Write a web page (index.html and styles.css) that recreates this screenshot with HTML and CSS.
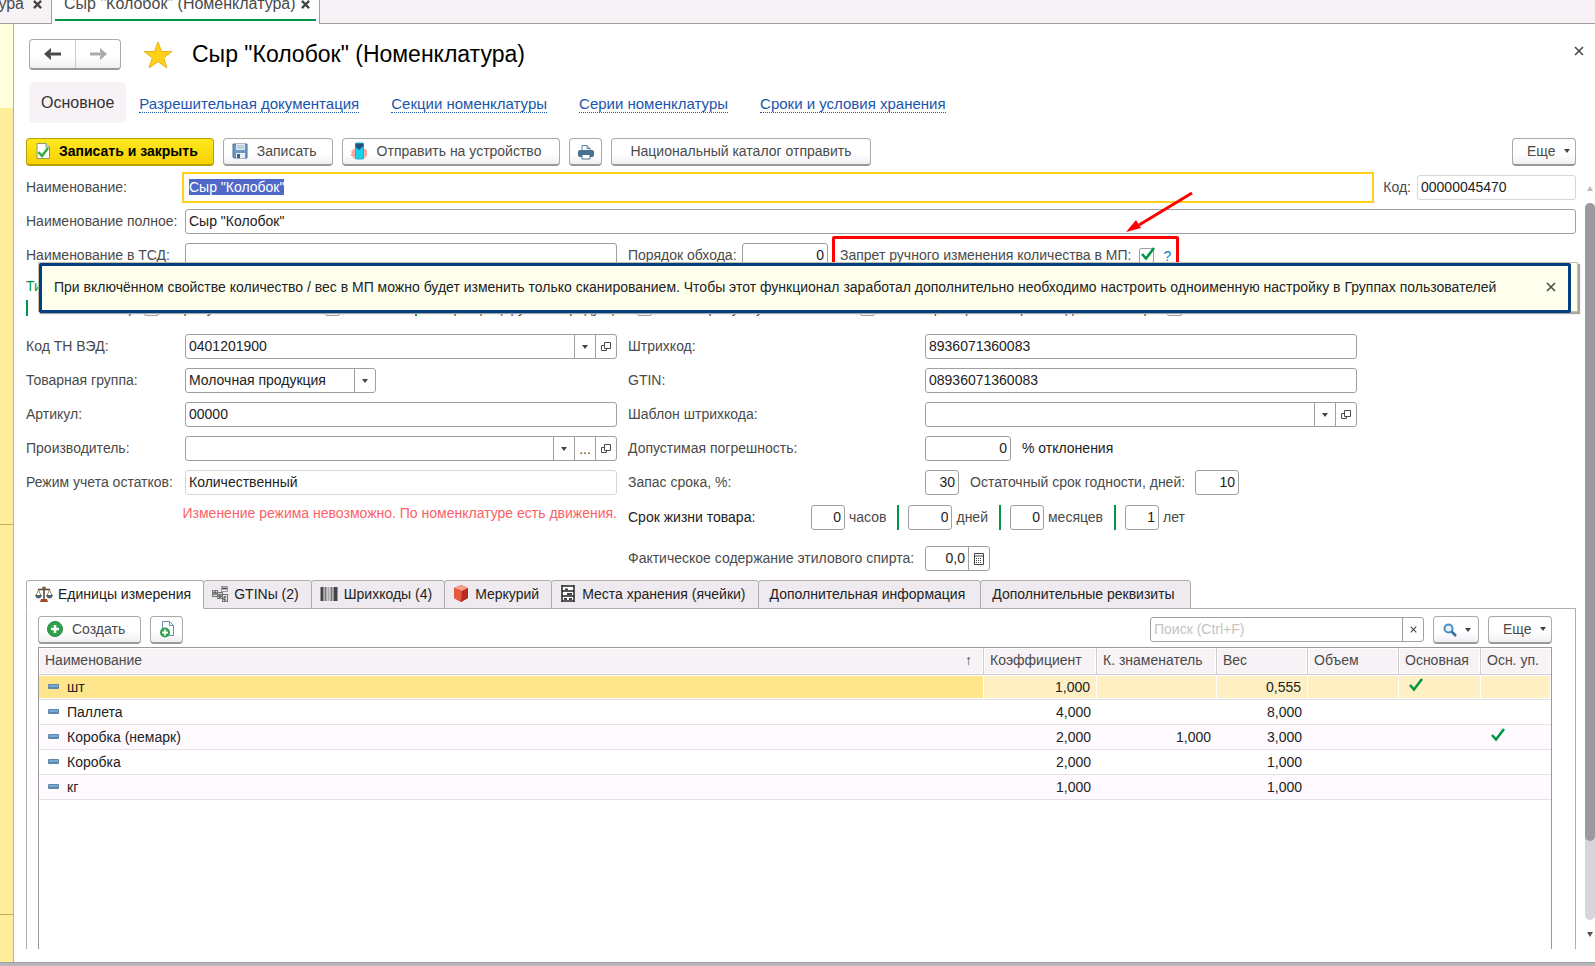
FILE: index.html
```html
<!DOCTYPE html>
<html lang="ru">
<head>
<meta charset="utf-8">
<title>Сыр "Колобок" (Номенклатура)</title>
<link rel="stylesheet" href="styles.css">
</head>
<body>
<svg class="sprite" aria-hidden="true">
  <symbol id="i-down" viewBox="0 0 6 4"><path d="M0 0h6L3 4z" fill="#444"/></symbol>
  <symbol id="i-open" viewBox="0 0 12 12"><path d="M4.500 1.500h6v6h-6zM4 4.500H1.500v5h5V8" fill="none" stroke="#4a4a4a"/></symbol>
  <symbol id="i-x" viewBox="0 0 10 10"><path d="M1 1l8 8M9 1l-8 8" fill="none" stroke="#444" stroke-width="1.500"/></symbol>
  <symbol id="i-xb" viewBox="0 0 10 10"><path d="M1 1l8 8M9 1l-8 8" fill="none" stroke="#444" stroke-width="2.500"/></symbol>
  <symbol id="i-check" viewBox="0 0 14 14"><path d="M1 7l4 4.500L13 1" fill="none" stroke="#009646" stroke-width="2.600"/></symbol>
  <symbol id="i-item" viewBox="0 0 11 5"><rect width="11" height="5" rx="1" fill="#5f86a8"/><rect x="1" y="1" width="9" height="2" fill="#74a9d8"/></symbol>
</svg>

<nav class="tabbar" aria-label="Открытые окна">
  <div class="wtab wtab-cut"><span>ура</span><svg class="x-bold"><use href="#i-xb"/></svg></div>
  <div class="wtab wtab-on"><span>Сыр "Колобок" (Номенклатура)</span><svg class="x-bold"><use href="#i-xb"/></svg></div>
</nav>

<div class="shell">
  <aside class="strip"><i class="s1"></i><i class="s2"></i><i class="s3"></i><i class="s4"></i></aside>

  <main class="page">
    <header class="head">
      <div class="history">
        <button type="button" aria-label="Назад"><svg width="18" height="12" viewBox="0 0 18 12"><path d="M17 6H4" stroke="#4a4a4a" stroke-width="3"/><path d="M0 6l7-6v3.500L5 6l2 2.500V12z" fill="#4a4a4a"/></svg></button>
        <button type="button" aria-label="Вперед"><svg width="18" height="12" viewBox="0 0 18 12"><path d="M1 6h13" stroke="#aaa" stroke-width="3"/><path d="M18 6l-7-6v3.500L13 6l-2 2.500V12z" fill="#aaa"/></svg></button>
      </div>
      <svg class="star" viewBox="0 0 30 28"><path d="M15 1l3.600 9.500H29l-8.300 6.300L24 27l-9-6.300L6 27l3.300-10.200L1 10.500h10.400z" fill="#ffd015" stroke="#e8b11c"/></svg>
      <h1>Сыр "Колобок" (Номенклатура)</h1>
      <button type="button" class="plain close" aria-label="Закрыть"><svg width="10" height="10"><use href="#i-x"/></svg></button>
    </header>

    <nav class="sections">
      <span class="current">Основное</span>
      <a href="#doc">Разрешительная документация</a>
      <a href="#sec">Секции номенклатуры</a>
      <a href="#ser">Серии номенклатуры</a>
      <a href="#store">Сроки и условия хранения</a>
    </nav>

    <div class="toolbar">
      <button type="button" class="btn primary">
        <svg width="14" height="16" viewBox="0 0 14 16"><path d="M1 .5h9l3.500 3.500v11.500H1z" fill="#fff" stroke="#8a9a6a"/><path d="M10 .5V4h3.500" fill="#ddd" stroke="#8a9a6a"/><path d="M2.500 9l3.500 4 6-8" fill="none" stroke="#2fae3e" stroke-width="2.500"/></svg>
        <span>Записать и закрыть</span></button>
      <button type="button" class="btn">
        <svg width="16" height="16" viewBox="0 0 16 16"><path d="M1 1h14v14H2l-1-1z" fill="#6f97c4" stroke="#4a6f9c"/><path d="M4 1h9v6H4z" fill="#dfe8f2"/><path d="M5 3h7M5 5h7" stroke="#9db4cc"/><path d="M4 10h9v5H4z" fill="#e8eef5"/><path d="M5 11h3v4H5z" fill="#3f6187"/></svg>
        <span>Записать</span></button>
      <button type="button" class="btn send">
        <svg width="17" height="18" viewBox="0 0 17 18"><path d="M4 6L1 8v3l-1 2 2 3 2 1zM13 6l3 2v6l-3 3z" fill="#fbb9b2"/><path d="M4.500 2q0-1 1-1h6q1 0 1 1v14q0 1-1 1h-6q-1 0-1-1z" fill="#14d4ea" stroke="#35a9c4"/><path d="M4.500 1.500h8V4L8 8 4.500 5z" fill="#23517f"/><path d="M0 10h4M0 13h4M13 9h3M13 12h3" stroke="#f48d86"/></svg>
        <span>Отправить на устройство</span></button>
      <button type="button" class="btn icon-only" aria-label="Печать">
        <svg width="16" height="16" viewBox="0 0 16 16"><path d="M4 7V1.500h5l3 3V7" fill="#fff" stroke="#5c7f9e"/><path d="M9 1.500v3h3" fill="none" stroke="#5c7f9e"/><rect y="6" width="16" height="7" rx="2" fill="#48708f"/><path d="M4 10.500h8v4.500H4z" fill="#fff" stroke="#48708f"/></svg></button>
      <button type="button" class="btn catalog">Национальный каталог отправить</button>
      <button type="button" class="btn more">Еще <svg width="6" height="4"><use href="#i-down"/></svg></button>
    </div>

    <div class="scroll">
      <form class="form" onsubmit="return false">
        <div class="row">
          <label class="lab" for="name">Наименование:</label>
          <input class="box grow focused" id="name" value='Сыр "Колобок"'>
          <label class="code-lab" for="code">Код:</label>
          <input class="box ro code" id="code" value="00000045470" readonly>
        </div>
        <div class="row">
          <label class="lab" for="full">Наименование полное:</label>
          <input class="box grow" id="full" value='Сыр "Колобок"'>
        </div>
        <div class="row cols">
          <label for="tsd">Наименование в ТСД:</label>
          <input class="box" id="tsd">
          <div class="tail from-mid">
            <label class="order-lab" for="order">Порядок обхода:</label>
            <input class="box num w86" id="order" value="0">
            <div class="callout">
              <label for="ban">Запрет ручного изменения количества в МП:</label>
              <span class="tick"><input type="checkbox" id="ban" checked><svg width="14" height="14"><use href="#i-check"/></svg></span>
              <button type="button" class="plain help">?</button>
              <svg class="arrow" width="70" height="44" viewBox="0 0 70 44"><path d="M67 3L14 35" stroke="#f00" stroke-width="3"/><path d="M1 42l10-12 5 8z" fill="#f00"/></svg>
            </div>
          </div>
        </div>

        <div class="kind" role="group" aria-labelledby="kind-title">
          <div class="kind-title" id="kind-title">Тип номенклатуры</div>
          <div class="flags">
            <label class="f1">Весовой товар: <input type="checkbox"></label>
            <label class="f2">Требует взвешивания: <input type="checkbox"></label>
            <label class="f3">Сертифицируемая продукция: <input type="checkbox"></label>
            <label class="f4">Не требует учета остатков: <input type="checkbox"></label>
            <label class="f5">Контролировать сроки годности товара: <input type="checkbox"></label>
          </div>
          <div class="tip" role="tooltip">
            <div class="tip-frame">
              <span>При включённом свойстве количество / вес в МП можно будет изменить только сканированием. Чтобы этот функционал заработал дополнительно необходимо настроить одноименную настройку в Группах пользователей</span>
              <button type="button" class="plain" aria-label="Закрыть подсказку"><svg width="10" height="10"><use href="#i-x"/></svg></button>
            </div>
          </div>
        </div>

        <div class="row cols">
          <label for="tnved">Код ТН ВЭД:</label>
          <div class="box combo"><input id="tnved" value="0401201900"><button type="button" aria-label="Выбрать"><svg width="6" height="4"><use href="#i-down"/></svg></button><button type="button" aria-label="Открыть"><svg width="12" height="12"><use href="#i-open"/></svg></button></div>
          <label class="c4" for="bar">Штрихкод:</label>
          <input class="box c5" id="bar" value="8936071360083">
        </div>
        <div class="row cols">
          <label for="group">Товарная группа:</label>
          <div class="box combo w191"><select id="group"><option>Молочная продукция</option></select><button type="button" aria-label="Выбрать"><svg width="6" height="4"><use href="#i-down"/></svg></button></div>
          <label class="c4" for="gtin">GTIN:</label>
          <input class="box c5" id="gtin" value="08936071360083">
        </div>
        <div class="row cols">
          <label for="art">Артикул:</label>
          <input class="box" id="art" value="00000">
          <label class="c4" for="tpl">Шаблон штрихкода:</label>
          <div class="box combo c5"><input id="tpl"><button type="button" aria-label="Выбрать"><svg width="6" height="4"><use href="#i-down"/></svg></button><button type="button" aria-label="Открыть"><svg width="12" height="12"><use href="#i-open"/></svg></button></div>
        </div>
        <div class="row cols">
          <label for="maker">Производитель:</label>
          <div class="box combo"><input id="maker"><button type="button" aria-label="Выбрать"><svg width="6" height="4"><use href="#i-down"/></svg></button><button type="button" aria-label="Показать все">...</button><button type="button" aria-label="Открыть"><svg width="12" height="12"><use href="#i-open"/></svg></button></div>
          <label class="c4" for="dev">Допустимая погрешность:</label>
          <div class="tail"><input class="box num w86" id="dev" value="0"><span class="dark unit">% отклонения</span></div>
        </div>
        <div class="row cols">
          <label for="mode">Режим учета остатков:</label>
          <input class="box ro" id="mode" value="Количественный" readonly>
          <label class="c4" for="reserve">Запас срока, %:</label>
          <div class="tail"><input class="box num w34" id="reserve" value="30"><label class="unit" for="rest">Остаточный срок годности, дней:</label><input class="box num w44 near" id="rest" value="10"></div>
        </div>
        <div class="row cols">
          <p class="warn">Изменение режима невозможно. По номенклатуре есть движения.</p>
          <div class="tail from-mid life">
            <span class="dark life-lab">Срок жизни товара:</span>
            <label class="part"><input class="box num w34" value="0"><span>часов</span></label>
            <label class="part bar"><input class="box num w44" value="0"><span>дней</span></label>
            <label class="part bar"><input class="box num w34" value="0"><span>месяцев</span></label>
            <label class="part bar"><input class="box num w34" value="1"><span>лет</span></label>
          </div>
        </div>
        <div class="row cols spirit">
          <label class="c4" for="alc">Фактическое содержание этилового спирта:</label>
          <div class="box combo c5 w65"><input class="num" id="alc" value="0,0"><button type="button" aria-label="Калькулятор"><svg width="10" height="12" viewBox="0 0 10 12"><path d="M.5.5h9v11h-9zM0 3h10" fill="none" stroke="#444"/><path d="M2 5.500h6M2 7.500h6M2 9.500h6" stroke="#444" stroke-dasharray="1 1"/></svg></button></div>
        </div>

        <div class="tabs" role="tablist">
          <button type="button" role="tab" aria-selected="true">
            <svg width="18" height="16" viewBox="0 0 18 16"><path d="M9 1v12M3 3.500h12" stroke="#5a4636" stroke-width="1.600"/><circle cx="9" cy="2.500" r="2" fill="#7a5c44"/><path d="M3.500 4L1 9.500M3.500 4L6 9.500M14.500 4L12 9.500M14.500 4L17 9.500" stroke="#8a8f6a"/><path d="M0 9h7q-1 3.500-3.500 3.500T0 9zM11 9h7q-1 3.500-3.500 3.500T11 9z" fill="#4f6071"/><path d="M6 13h6l1 3H5z" fill="#a34a2c"/></svg><span>Единицы измерения</span></button>
          <button type="button" role="tab">
            <svg width="16" height="16" viewBox="0 0 16 16"><rect x="9.500" y=".5" width="6" height="5" fill="#fff" stroke="#999"/><path d="M10 2.500h5" stroke="#555" stroke-width="2"/><rect x=".5" y="4.500" width="5" height="6" fill="#ddd" stroke="#777"/><rect x="5.500" y="6.500" width="5" height="6" fill="#ccc" stroke="#777"/><rect x="10.500" y="8.500" width="5" height="7" fill="#ddd" stroke="#777"/><path d="M2 9V6h2v3M7 8v3h2V8M14 11h-2v3h2" fill="none" stroke="#333"/></svg><span>GTINы (2)</span></button>
          <button type="button" role="tab">
            <svg width="18" height="14" viewBox="0 0 18 14"><path d="M2 0v14" stroke="#444" stroke-width="3"/><path d="M5.500 0v14M11.500 0v14" stroke="#777" stroke-width="2"/><path d="M8.500 0v14" stroke="#aaa" stroke-width="2"/><path d="M15.500 0v14" stroke="#444" stroke-width="4"/></svg><span>Шрихкоды (4)</span></button>
          <button type="button" role="tab">
            <svg width="16" height="17" viewBox="0 0 16 17"><path d="M8 0l7 3v10l-7 4-7-4V3z" fill="#d8402f"/><path d="M8 0l7 3-6 3-8-3z" fill="#f4a08a"/><path d="M1 3l8 3-1 11-7-4z" fill="#e9573f"/><path d="M9 6l6-3v10l-7 4z" fill="#b52a24"/></svg><span>Меркурий</span></button>
          <button type="button" role="tab">
            <svg width="16" height="17" viewBox="0 0 16 17"><rect x="1" width="14" height="17" fill="#fff"/><path d="M2 0v17M14 0v17" stroke="#222" stroke-width="1.500"/><path d="M2 1h12M2 6h12M2 11h12M2 16h12" stroke="#222" stroke-width="1.500"/><path d="M5 4.500h3M7 9h5M4 14h3M9 14h3" stroke="#444" stroke-width="2"/></svg><span>Места хранения (ячейки)</span></button>
          <button type="button" role="tab" class="text-tab"><span>Дополнительная информация</span></button>
          <button type="button" role="tab" class="text-tab"><span>Дополнительные реквизиты</span></button>
        </div>

        <section class="panel">
          <div class="toolbar inner">
            <button type="button" class="btn create">
              <svg width="16" height="16" viewBox="0 0 16 16"><circle cx="8" cy="8" r="7.500" fill="#2ea24a" stroke="#1f8a3a"/><path d="M8 4v8M4 8h8" stroke="#fff" stroke-width="2.500"/></svg>
              <span>Создать</span></button>
            <button type="button" class="btn icon-only" aria-label="Создать копированием">
              <svg width="16" height="17" viewBox="0 0 16 17"><path d="M3.500.5h7l4 4v10h-11z" fill="#fff" stroke="#6d8fb0"/><path d="M10.500.5v4h4" fill="none" stroke="#6d8fb0"/><circle cx="6" cy="11.500" r="5" fill="#2ea24a"/><path d="M6 8.500v6M3 11.500h6" stroke="#fff" stroke-width="1.800"/></svg></button>
            <div class="box combo search"><input aria-label="Поиск" placeholder="Поиск (Ctrl+F)"><button type="button" aria-label="Очистить"><svg width="7" height="7"><use href="#i-x"/></svg></button></div>
            <button type="button" class="btn find" aria-label="Найти"><svg width="14" height="14" viewBox="0 0 14 14"><circle cx="5.500" cy="5.500" r="4" fill="#e6f1fa" stroke="#4a8fc4" stroke-width="2"/><path d="M8.500 8.500L13 13" stroke="#3a6f9c" stroke-width="2.500"/></svg><svg width="6" height="4"><use href="#i-down"/></svg></button>
            <button type="button" class="btn more">Еще <svg width="6" height="4"><use href="#i-down"/></svg></button>
          </div>
          <div class="grid">
            <table>
              <colgroup><col><col class="k1"><col class="k2"><col class="k3"><col class="k3"><col class="k4"><col class="k5"></colgroup>
              <thead><tr><th><div class="sort"><span>Наименование</span><span>↑</span></div></th><th>Коэффициент</th><th>К. знаменатель</th><th>Вес</th><th>Объем</th><th>Основная</th><th>Осн. уп.</th></tr></thead>
              <tbody>
                <tr class="sel"><td><svg class="item"><use href="#i-item"/></svg>шт</td><td>1,000</td><td></td><td>0,555</td><td></td><td><svg class="mark"><use href="#i-check"/></svg></td><td></td></tr>
                <tr><td><svg class="item"><use href="#i-item"/></svg>Паллета</td><td>4,000</td><td></td><td>8,000</td><td></td><td></td><td></td></tr>
                <tr><td><svg class="item"><use href="#i-item"/></svg>Коробка (немарк)</td><td>2,000</td><td>1,000</td><td>3,000</td><td></td><td></td><td><svg class="mark"><use href="#i-check"/></svg></td></tr>
                <tr><td><svg class="item"><use href="#i-item"/></svg>Коробка</td><td>2,000</td><td></td><td>1,000</td><td></td><td></td><td></td></tr>
                <tr><td><svg class="item"><use href="#i-item"/></svg>кг</td><td>1,000</td><td></td><td>1,000</td><td></td><td></td><td></td></tr>
              </tbody>
            </table>
          </div>
        </section>
      </form>

      <div class="scrollbar" aria-hidden="true">
        <svg width="6" height="5" viewBox="0 0 6 5"><path d="M0 5h6L3 0z" fill="#bbb"/></svg>
        <div class="track"><div class="thumb"></div></div>
        <svg width="6" height="5" viewBox="0 0 6 5"><path d="M0 0h6L3 5z" fill="#555"/></svg>
      </div>
    </div>
  </main>
</div>
<div class="base"></div>
<script src="app.js"></script>
</body>
</html>
```

FILE: styles.css
```css
* { box-sizing: border-box; }
body {
  margin: 0;
  height: 100vh;
  display: flex;
  flex-direction: column;
  overflow: hidden;
  background: #fff;
  color: #4a4a4a;
  font: 14px/18px "Liberation Sans", Arial, sans-serif;
}
button, input, select { font: inherit; color: inherit; margin: 0; }
input, select { color: #222; }
button { cursor: pointer; }
svg { flex: none; display: block; }
.sprite { position: absolute; width: 0; height: 0; }
.plain { border: 0; padding: 0; background: none; }
.dark { color: #222; }

/* window tabs */
.tabbar {
  flex: none;
  display: flex;
  height: 24px;
  background: #f6f2f6;
  border-bottom: 1px solid #a0a0a0;
  font-size: 16px;
  white-space: nowrap;
}
.wtab { display: flex; align-items: flex-start; height: 23px; line-height: 8px; }
.wtab-cut { width: 51px; justify-content: flex-end; gap: 9px; padding-right: 9px; }
.wtab-on {
  height: 24px;
  gap: 5px;
  padding: 0 9px 0 12px;
  background: #fff linear-gradient(#009646, #009646) 3px 19px / calc(100% - 6px) 2px no-repeat;
  border: solid #a0a0a0;
  border-width: 0 1px;
}
.x-bold { width: 9px; height: 9px; }

.shell { flex: 1; min-height: 0; display: flex; }
.strip { flex: none; width: 14px; display: flex; flex-direction: column; background: #ffed9b; border-right: 1px solid #c8b568; }
.strip i { border-bottom: 1px solid #c0ae58; }
.strip .s1 { flex: 84 0 0; background: #ffffdc; border: 0; }
.strip .s2 { flex: 417 0 0; }
.strip .s3 { flex: 390 0 0; }
.strip .s4 { flex: 47 0 0; border: 0; }

.page { flex: 1; min-width: 0; display: flex; flex-direction: column; padding: 15px 19px 13px 12px; }

/* header */
.head { display: flex; align-items: center; height: 31px; margin: 0 -8px 0 3px; }
.history { display: flex; height: 31px; border: 1px solid #aaa; border-bottom: 2px solid #999; border-radius: 4px; background: linear-gradient(#fff 55%, #f1eef2); }
.history button { width: 45px; padding: 0; border: 0; background: none; display: flex; align-items: center; justify-content: center; }
.history button + button { border-left: 1px solid #ccc; }
.star { width: 30px; height: 28px; margin: 0 19px 0 22px; }
h1 { margin: 0; padding-bottom: 2px; font-size: 23px; line-height: 28px; font-weight: 400; color: #000; }
.close { margin: 0 0 8px auto; }

.sections { display: flex; align-items: center; gap: 32px; height: 41px; margin: 12px 0 0 3px; font-size: 15px; white-space: nowrap; }
.current { padding: 12px 12px 11px; margin-right: -19px; border-radius: 5px; background: #f6f2f6; color: #333; font-size: 16px; }
.sections a { color: #1a55ac; text-decoration: none; line-height: 17px; margin-top: 2px; border-bottom: 1px dotted #1a55ac; }

/* command bar */
.toolbar { display: flex; gap: 9px; margin-top: 15px; }
.btn {
  display: flex;
  align-items: center;
  gap: 9px;
  height: 28px;
  padding: 0 15px 1px 8px;
  border: 1px solid #aaa;
  border-bottom: 2px solid #999;
  border-radius: 4px;
  background: linear-gradient(#fff 60%, #f1eef2);
  white-space: nowrap;
}
.btn.send { padding-right: 18px; }
.btn.catalog { padding: 0 18px 1px; }
.btn.primary { gap: 9px; padding-left: 9px; color: #000; font-weight: 700; background: linear-gradient(#ffe81f, #f6d200); border-color: #b8a000; }
.btn.icon-only { width: 33px; padding: 0; justify-content: center; }
.btn.more { width: 64px; margin-left: auto; padding: 0 6px 1px 14px; gap: 8px; }

/* form */
.scroll { flex: 1; min-height: 0; display: flex; gap: 9px; margin: 9px -19px 0 0; }
.form { flex: 1; min-width: 0; display: flex; flex-direction: column; gap: 9px; white-space: nowrap; }
.row { display: flex; align-items: center; height: 25px; flex: none; }
.row label, .row span { padding-bottom: 2px; }
.cols { display: grid; grid-template-columns: 159px minmax(0, 432fr) 11px 297px minmax(0, 432fr) 219fr; }
.lab { width: 159px; flex: none; }
.box { height: 25px; width: 100%; min-width: 0; padding: 0 3px 2px; border: 1px solid #a0a0a0; border-radius: 3px; background: #fff; }
.ro { border-color: #d6d6d6; }
.grow { flex: 1; }
.focused { border-color: #fff; border-radius: 0; outline: 2px solid #ffd015; outline-offset: 1px; margin-right: 3px; }
.focused::selection { background: #5069c8; color: #fff; }
.code-lab { margin: 0 6px 0 9px; }
.box.code { width: 159px; }
.num { text-align: right; }
.c4 { grid-column: 4; }
.c5 { grid-column: 5; }
.tail { grid-column: 5 / 7; display: flex; align-items: center; }
.from-mid { grid-column: 4 / 7; }
.box.w34 { width: 34px; }
.box.w44 { width: 44px; }
.box.w65 { width: 65px; }
.box.w86 { width: 86px; }
.box.w191 { width: 191px; }
.unit { margin-left: 11px; }
.near { margin-left: 10px; }

.combo { display: flex; padding: 0; overflow: hidden; }
.combo input, .combo select { flex: 1; width: 0; min-width: 0; border: 0; outline: 0; padding: 0 3px 2px; background: none; appearance: none; }
.combo button { width: 21px; flex: none; display: flex; align-items: center; justify-content: center; padding: 0; border: 0; border-left: 1px solid #a0a0a0; background: none; }
.combo ::placeholder { color: #c4c4c4; }

input[type="checkbox"] { appearance: none; width: 15px; height: 15px; border: 1px solid #a0a0a0; border-radius: 2px; background: #fff; }

.order-lab { width: 114px; }
.callout { position: relative; display: flex; align-items: center; margin-left: 12px; }
.callout::before { content: ""; position: absolute; inset: -10px -8px 1px -8px; border: 3px solid #f00; border-radius: 2px; pointer-events: none; }
.row .tick { display: flex; position: relative; margin: 0 9px 0 8px; padding: 0; }
.tick svg { position: absolute; left: 2px; top: -1px; pointer-events: none; }
.help { color: #0b7bd0; }
.arrow { position: absolute; right: -24px; bottom: 32px; }

.kind { position: relative; height: 48px; flex: none; }
.kind-title { height: 18px; color: #009646; }
.flags { display: flex; height: 16px; margin-top: 5px; padding-left: 5px; border-left: 2px solid #009646; }
.flags label { display: flex; align-items: center; justify-content: flex-end; gap: 4px; height: 16px; }
.f1 { width: 126px; }
.f2 { width: 181px; }
.f3 { width: 312px; }
.f4 { width: 223px; }
.f5 { width: 307px; }
.f3::before { content: ""; width: 2px; height: 16px; margin-right: auto; margin-left: 75px; background: #009646; }
.tip { position: absolute; z-index: 2; left: 12px; right: -2px; top: -15px; height: 50px; padding-right: 6px; border: 1px solid #c9bda8; background: #ffffee; box-shadow: 2px 2px 1px #a9a4a4; }
.tip-frame { display: flex; align-items: center; justify-content: space-between; height: 50px; padding: 0 12px 2px 12px; border: 3px solid #003f80; border-radius: 2px; color: #222; background: #ffffee; }

.warn { grid-column: 1 / 3; margin: 0 0 9px; text-align: right; color: #fb5f68; }
.life-lab { width: 183px; }
.row .part { display: flex; align-items: center; gap: 4px; padding: 0; }
.part.bar::before { content: ""; width: 2px; height: 25px; margin: 0 5px 0 11px; background: #009646; }
.spirit { margin-top: 8px; }

/* tabs */
.tabs { display: flex; flex: none; height: 29px; margin-bottom: -10px; }
.tabs button {
  display: flex;
  align-items: center;
  gap: 6px;
  height: 29px;
  padding: 0 12px 2px 8px;
  margin-right: -1px;
  border: 1px solid #b0acb0;
  border-radius: 3px 3px 0 0;
  background: #efeaef;
  color: #222;
}
.tabs .text-tab { padding: 0 15px 2px 11px; }
.tabs button[aria-selected="true"] { gap: 5px; background: #fff; border-bottom-color: #fff; position: relative; z-index: 1; }
.panel { flex: 1; min-height: 0; display: flex; flex-direction: column; padding: 7px 23px 0 11px; border: 1px solid #b0acb0; border-bottom: 0; }
.inner { margin: 0 0 3px; }
.box.search { width: 274px; height: 25px; margin: 1px 0 0 auto; }
.btn.find { width: 46px; padding: 0 7px 0 9px; justify-content: space-between; gap: 0; }
.inner .btn.more { margin-left: 0; }

/* list of units */
.grid { flex: 1; min-height: 0; border: 1px solid #999; border-bottom: 0; }
table { width: 100%; table-layout: fixed; border-collapse: separate; border-spacing: 0; }
.k1 { width: 113px; }
.k2 { width: 120px; }
.k3 { width: 91px; }
.k4 { width: 82px; }
.k5 { width: 70px; }
th { height: 27px; padding: 0 6px 2px; text-align: left; font-weight: 400; background: #f6f2f6; border-bottom: 1px solid #ccc; border-right: 1px solid #ccc; box-shadow: inset 0 0 0 1px #fff; }
th:last-child { border-right: 0; }
.sort { display: flex; justify-content: space-between; padding-right: 5px; }
td { height: 25px; padding: 0 6px; text-align: right; color: #222; border-bottom: 1px solid #e4e0e4; }
td:first-child { text-align: left; }
tr:nth-child(odd) td { background: #fffaff; }
tr.sel td { background: #fff0c3; border-right: 1px solid #fff; box-shadow: inset 0 1px #fff, inset 0 -1px #fff; }
tr.sel td:first-child { background: #ffe68c; }
.item { display: inline-block; width: 11px; height: 5px; margin: 0 8px 3px 3px; vertical-align: baseline; }
.mark { width: 14px; height: 14px; margin: 0 0 4px 4px; }

/* scroll bar */
.scrollbar { flex: none; width: 10px; display: flex; flex-direction: column; align-items: center; padding: 11px 0 12px; gap: 12px; }
.track { flex: 1; width: 10px; border-radius: 5px; background: #d8d6d8; }
.thumb { height: 89%; border-radius: 5px; background: #9c999c; }
.base { flex: none; height: 4px; background: #b8b8ba; border-top: 1px solid #a0a0a4; }
```

FILE: app.js
```js
const nameField = document.getElementById("name");
nameField.focus();
nameField.select();
```
